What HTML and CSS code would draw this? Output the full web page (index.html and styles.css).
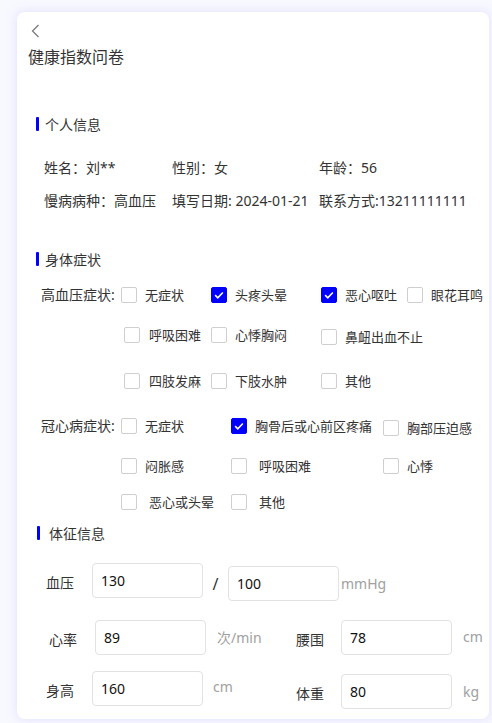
FILE: index.html
```html
<!DOCTYPE html>
<html lang="zh-CN">
<head>
  <meta charset="UTF-8" />
  <meta name="viewport" content="width=device-width, initial-scale=1.0"/>
  <title>健康指数问卷</title>
  <link rel="stylesheet" href="styles.css">
</head>
<body>
  <div class="page">
    <div class="card">
      <div class="nav">
        <svg class="back" width="9" height="14" viewBox="0 0 9 14"><path d="M7.5 1 L1.5 7 L7.5 13" fill="none" stroke="#777" stroke-width="1.2"/></svg>
      </div>
      <h1 class="title">健康指数问卷</h1>

      <div class="sec-head sec-info"><i class="bar"></i>个人信息</div>
      <div class="info">
        <span>姓名：刘**</span>
        <span>性别：女</span>
        <span>年龄：56</span>
        <span>慢病病种：高血压</span>
        <span>填写日期: 2024-01-21</span>
        <span>联系方式:13211111111</span>
      </div>

      <div class="sec-head sec-body"><i class="bar"></i>身体症状</div>
      <div class="group hbp">
        <div class="glabel">高血压症状:</div>
        <div class="opts">
          <label class="opt"><span class="cb"></span>无症状</label>
          <label class="opt"><span class="cb on"><svg viewBox="0 0 16 16"><path d="M3.6 8.2 L6.6 11.2 L12.4 5.2"/></svg></span>头疼头晕</label>
          <label class="opt"><span class="cb on"><svg viewBox="0 0 16 16"><path d="M3.6 8.2 L6.6 11.2 L12.4 5.2"/></svg></span>恶心呕吐</label>
          <label class="opt"><span class="cb"></span>眼花耳鸣</label>

          <label class="opt shift"><span class="cb"></span>呼吸困难</label>
          <label class="opt"><span class="cb"></span>心悸胸闷</label>
          <label class="opt low"><span class="cb"></span>鼻衄出血不止</label>
          <span></span>

          <label class="opt shift"><span class="cb"></span>四肢发麻</label>
          <label class="opt"><span class="cb"></span>下肢水肿</label>
          <label class="opt"><span class="cb"></span>其他</label>
        </div>
      </div>

      <div class="group chd">
        <div class="glabel">冠心病症状:</div>
        <div class="opts">
          <label class="opt"><span class="cb"></span>无症状</label>
          <label class="opt"><span class="cb on"><svg viewBox="0 0 16 16"><path d="M3.6 8.2 L6.6 11.2 L12.4 5.2"/></svg></span>胸骨后或心前区疼痛</label>
          <label class="opt low"><span class="cb"></span>胸部压迫感</label>

          <label class="opt"><span class="cb"></span>闷胀感</label>
          <label class="opt wide"><span class="cb"></span>呼吸困难</label>
          <label class="opt"><span class="cb"></span>心悸</label>

          <label class="opt wide"><span class="cb"></span>恶心或头晕</label>
          <label class="opt wide"><span class="cb"></span>其他</label>
        </div>
      </div>

      <div class="sec-head sec-vital"><i class="bar"></i>体征信息</div>

      <div class="vrow r1">
        <span class="vlabel">血压</span>
        <input class="vinput" type="text" value="130">
        <span class="slash">/</span>
        <input class="vinput" type="text" value="100">
        <span class="unit">mmHg</span>
      </div>
      <div class="vrow r2">
        <span class="vlabel">心率</span>
        <input class="vinput" type="text" value="89">
        <span class="unit u1">次/min</span>
        <span class="vlabel l2">腰围</span>
        <input class="vinput" type="text" value="78">
        <span class="unit u2">cm</span>
      </div>
      <div class="vrow r3">
        <span class="vlabel">身高</span>
        <input class="vinput" type="text" value="160">
        <span class="unit u1">cm</span>
        <span class="vlabel l2">体重</span>
        <input class="vinput" type="text" value="80">
        <span class="unit u2">kg</span>
      </div>
    </div>
  </div>
</body>
</html>
```

FILE: styles.css
```css
* { box-sizing: border-box; }

body {
  margin: 0;
  background: #f8f8ff;
  font-family: "Noto Sans", "Noto Sans CJK SC", sans-serif;
  color: #333;
  font-size: 14px;
}

.page {
  padding: 12px 3px 4px 17px;
}

.card {
  background: #ffffff;
  border-radius: 8px;
  box-shadow: 0 0 10px rgba(200, 200, 255, 0.5);
  padding-bottom: 13px;
}

.nav {
  height: 25px;
  padding: 12px 0 0 14px;
}

.back {
  display: block;
}

.title {
  margin: 8px 0 0 11px;
  font-size: 16px;
  font-weight: 400;
  line-height: 24px;
  color: #333;
}

/* section headings */
.sec-head {
  display: flex;
  align-items: center;
  height: 20px;
  margin-left: 19px;
  font-size: 14px;
}

.bar {
  width: 3px;
  height: 14px;
  background: #0000ff;
  border-radius: 1px;
  margin-right: 6px;
}

.sec-info { margin-top: 45px; }
.sec-body { margin-top: 33px; }
.sec-vital { margin-top: 5px; margin-left: 20px; }
.sec-vital .bar { margin-right: 9px; }

/* personal info */
.info {
  display: grid;
  grid-template-columns: 128px 147px auto;
  grid-auto-rows: 33px;
  align-items: center;
  margin: 16px 0 0 27px;
  white-space: nowrap;
}

/* symptom groups */
.group {
  display: flex;
}

.hbp { margin-top: 6px; }

.glabel {
  width: 80px;
  margin-left: 24px;
  height: 40px;
  line-height: 40px;
  white-space: nowrap;
}

.opts {
  display: grid;
  align-items: center;
}

.hbp .opts {
  grid-template-columns: 90px 110px 86px auto;
  grid-template-rows: 40px 40px 51px;
}

.chd .opts {
  grid-template-columns: 110px 152px auto;
  grid-template-rows: 40px 40px 32px;
}

.opt {
  display: flex;
  align-items: center;
  gap: 8px;
  font-size: 13px;
  line-height: 20px;
  white-space: nowrap;
}

.opt.shift { margin-left: 3px; gap: 9px; }
.opt.wide { gap: 12px; }
.opt.low { margin-top: 4px; }

.cb {
  width: 16px;
  height: 16px;
  flex: none;
  border: 1px solid #cfcfcf;
  border-radius: 2px;
  background: #fff;
}

.cb.on {
  background: #0000ff;
  border-color: #0000ff;
}

.cb svg {
  display: block;
  width: 14px;
  height: 14px;
  fill: none;
  stroke: #fff;
  stroke-width: 1.8;
}

/* vital signs */
.vrow {
  display: flex;
  align-items: flex-start;
  height: 35px;
  white-space: nowrap;
}

.r1 { margin-top: 20px; }
.r2 { margin-top: 22px; }
.r3 { margin-top: 16px; }

.vlabel {
  width: 46px;
  margin-left: 29px;
  margin-top: 10px;
  line-height: 20px;
}

.r2 .vlabel { margin-left: 32px; }
.vlabel.l2 { margin-left: 0; width: 45px; }
.r2 .l2 { margin-top: 10px; }
.r3 .l2 { margin-top: 13px; }

.vinput {
  width: 111px;
  height: 35px;
  border: 1px solid #e2e2e2;
  border-radius: 4px;
  padding: 0 0 0 8px;
  font-family: "Noto Sans", sans-serif;
  font-size: 14px;
  color: #111;
  background: #fff;
  outline: none;
}

.r1 .vinput + .slash + .vinput,
.r3 .l2 + .vinput {
  margin-top: 3px;
}

.slash {
  width: 25px;
  text-align: center;
  font-size: 16px;
  line-height: 20px;
  margin-top: 11px;
}

.unit {
  color: #a0a0a0;
  line-height: 20px;
  margin-left: 2px;
  margin-top: 11px;
}

.u1 { width: 79px; margin-left: 11px; margin-top: 8px; }
.u2 { margin-left: 11px; margin-top: 7px; }
.r3 .u1 { width: 83px; margin-left: 10px; margin-top: 6px; }
.r3 .u2 { margin-top: 11px; }
```
